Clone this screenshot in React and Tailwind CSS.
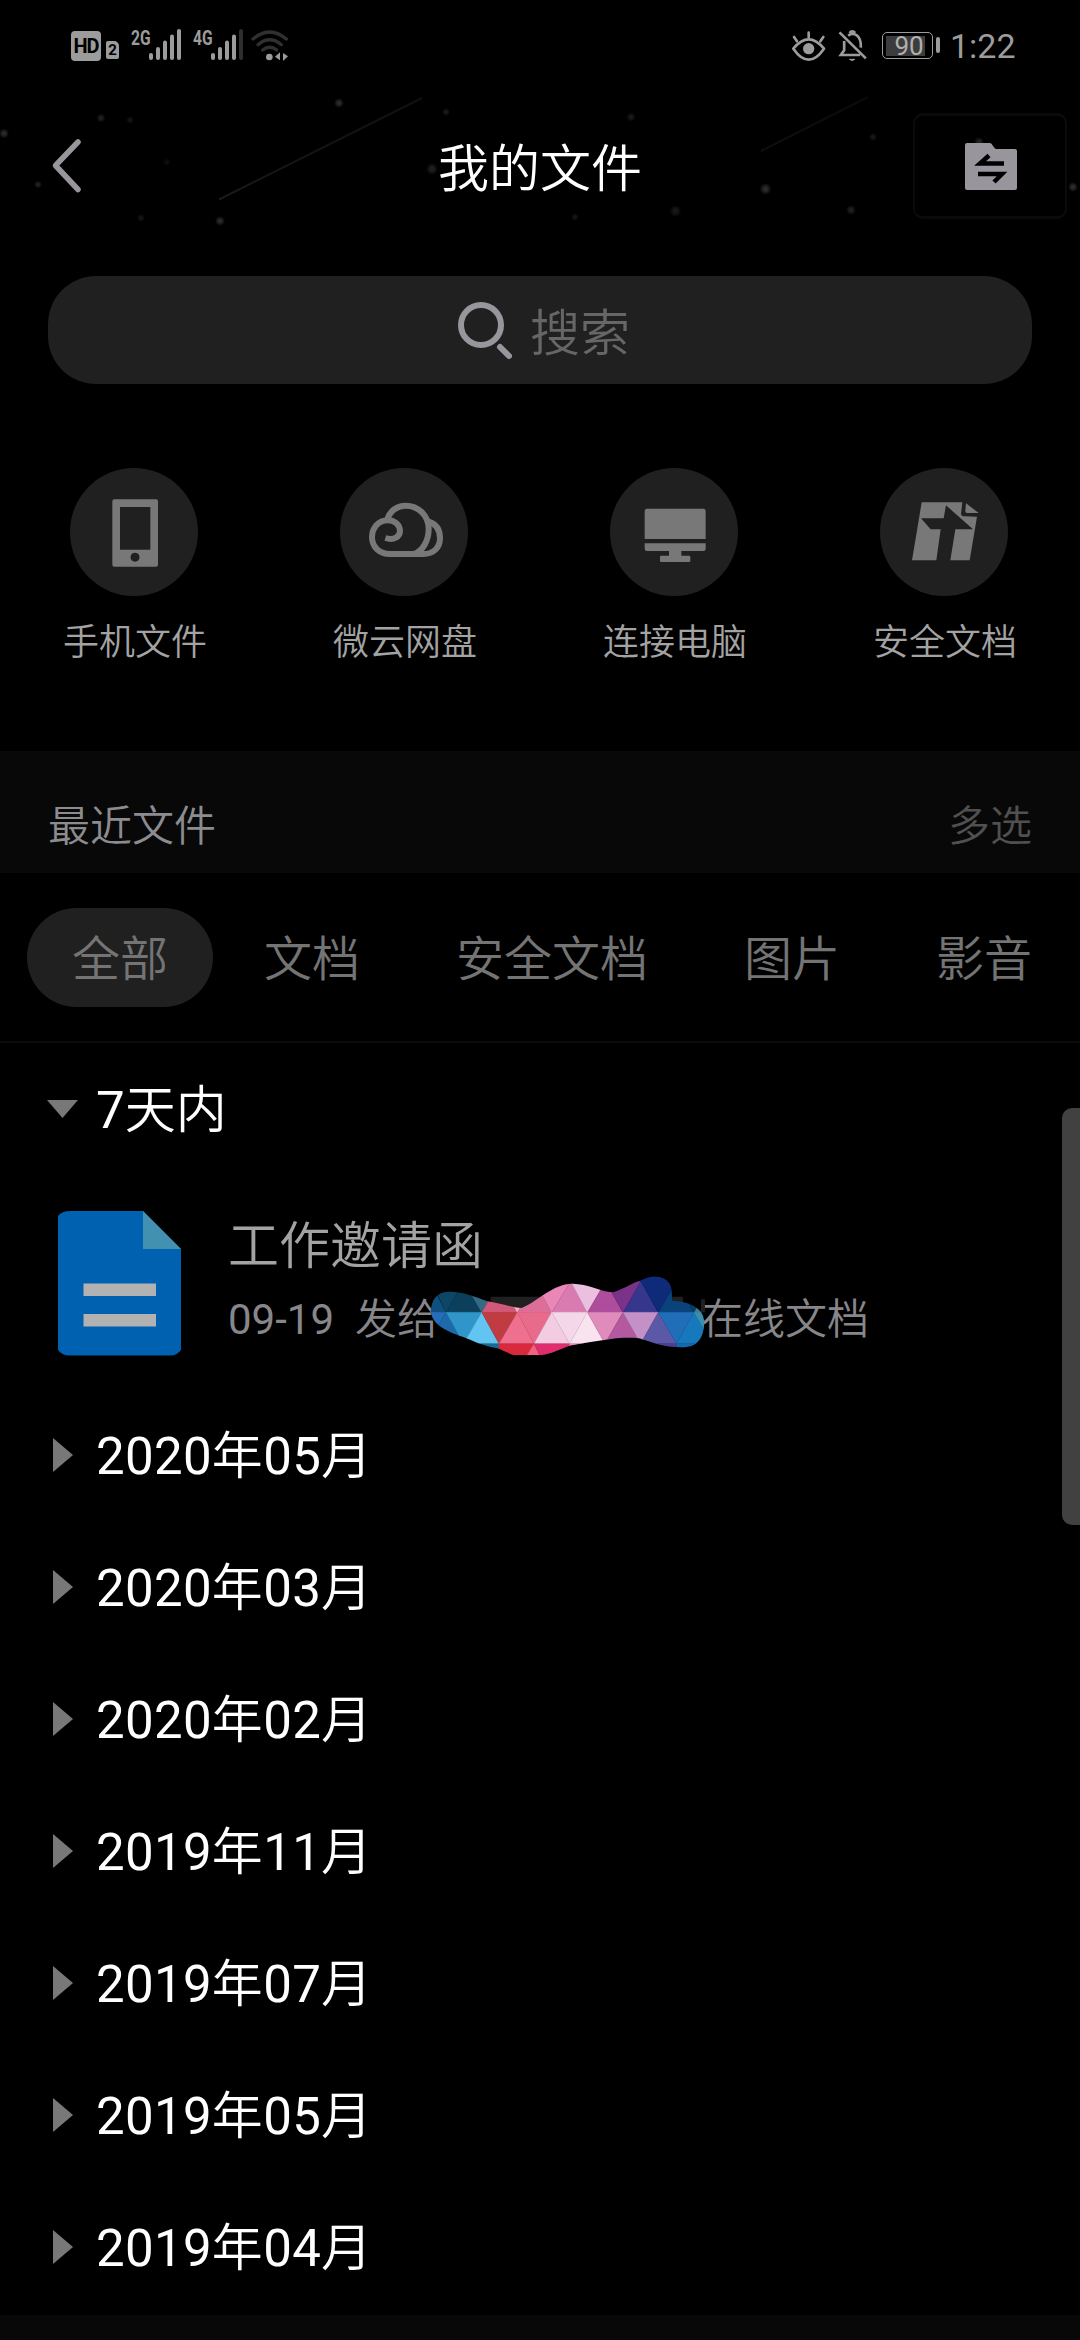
import React from "react";

const quickActions = [
  { label: "手机文件", Icon: PhoneIcon },
  { label: "微云网盘", Icon: CloudIcon },
  { label: "连接电脑", Icon: MonitorIcon },
  { label: "安全文档", Icon: SafeDocIcon },
];

const tabs = ["全部", "文档", "安全文档", "图片", "影音"];

const months = [
  "2020年05月",
  "2020年03月",
  "2020年02月",
  "2019年11月",
  "2019年07月",
  "2019年05月",
  "2019年04月",
];

const stars = [
  [4, 43.5, 4, 0.16], [101, 28, 3.5, 0.12], [130, 30, 3, 0.08], [339, 13, 4, 0.16],
  [446, 22, 3, 0.1], [167, 72, 3, 0.05], [38, 94.5, 3, 0.13], [141, 128, 3, 0.08],
  [220, 131, 4, 0.16], [432, 79, 5, 0.12], [631, 27, 3.5, 0.1], [575, 127, 3, 0.08],
  [675.5, 121, 5, 0.09], [765.5, 99, 5, 0.16], [851, 120, 4, 0.12], [873, 47, 3, 0.09],
  [979, 52, 4, 0.13], [1073, 97, 4, 0.17],
];

function PhoneIcon() {
  return (
    <svg viewBox="90 54 384 384" className="size-32">
      <path fill="#787878" fillRule="evenodd" d="M223 148H348a6 6 0 0 1 6 6V344a6 6 0 0 1 -6 6H223a6 6 0 0 1 -6 -6V154a6 6 0 0 1 6 -6ZM240 171V299H331V171ZM285 308a13.500 13.500 0 1 0 0.100 0Z" />
    </svg>
  );
}

function CloudIcon() {
  return (
    <svg viewBox="900 54 384 384" className="size-32" fill="none" stroke="#787878" strokeWidth="18">
      <path d="M1036 264C1062 272 1080 260 1080 243C1080 222 1062 211 1043 211C1015 211 996 234 996 262C996 292 1020 312 1050 312H1150C1182 312 1200 292 1200 264C1200 240 1188 222 1166 215" />
      <path d="M1042 208C1050 182 1072 167 1097 167C1136 167 1166 198 1166 237C1166 272 1148 304 1122 312" />
    </svg>
  );
}

function MonitorIcon() {
  return (
    <svg viewBox="150 54 384 384" className="size-32" fill="#787878">
      <path d="M261 176H430a7 7 0 0 1 7 7V267H254V183a7 7 0 0 1 7 -7Z" />
      <path d="M254 280H437V296a7 7 0 0 1 -7 7H364V317H387a4 4 0 0 1 4 4V332a4 4 0 0 1 -4 4H304a4 4 0 0 1 -4 -4V321a4 4 0 0 1 4 -4H327V303H261a7 7 0 0 1 -7 -7Z" />
    </svg>
  );
}

function SafeDocIcon() {
  return (
    <svg viewBox="960 54 384 384" className="size-32" fill="#787878">
      <path d="M1085 157H1207L1203 192Q1204 199 1211 199L1251 200L1229 331H1171L1186 238H1239L1158 166L1151 205H1083L1112 238H1142L1129 331H1056Z" />
      <path d="M1218 160L1256 189H1221Q1216 189 1216 184Z" />
    </svg>
  );
}

function SignalBars({ dimLast }) {
  const tops = [24, 18, 11.5, 5.500, 0];
  return (
    <svg viewBox="0 0 32 31" className="h-[31px] w-8">
      {tops.map((y, i) => (
        <rect key={i} x={i * 7} y={y} width="4" height={31 - y} rx="2" fill={dimLast && i === 4 ? "#2e2e2e" : "#9c9c9c"} />
      ))}
    </svg>
  );
}

function StatusBar() {
  return (
    <div className="flex h-[90px] items-start justify-between pr-[65px] pl-[71px] pt-[29px] text-[#9c9c9c]">
      <div className="flex h-8 items-start">
        <div className="mt-[2px] flex h-[30px] w-[30px] items-center justify-center rounded-[4px] bg-[#9c9c9c] text-[20px] leading-none font-bold tracking-[-1px] text-black">HD</div>
        <div className="mt-[12px] ml-[5px] flex h-[18px] w-[13px] items-center justify-center rounded-[2px] rounded-tr-[5px] bg-[#9c9c9c] text-[15px] leading-none font-bold text-black">2</div>
        <div className="mt-[-1px] ml-[12px] w-[18px] origin-left scale-x-[0.78] text-[20px] leading-[20px] font-bold whitespace-nowrap">2G</div>
        <SignalBars />
        <div className="mt-[-1px] ml-[12px] w-[18px] origin-left scale-x-[0.78] text-[20px] leading-[20px] font-bold whitespace-nowrap">4G</div>
        <SignalBars dimLast />
        <svg viewBox="634 56 114 96" className="ml-[8px] h-8 w-[38px]" fill="none" strokeLinecap="round">
          <path d="M640 86Q690 44 740 86" stroke="#303030" strokeWidth="10" />
          <path d="M655 103Q690 74 725 103" stroke="#303030" strokeWidth="10" />
          <path d="M669 119Q690 102 711 119" stroke="#303030" strokeWidth="10" />
          <circle cx="689" cy="140" r="10" fill="#9c9c9c" />
          <path d="M721 126V150L706 139ZM730 128V152L745 138Z" fill="#9c9c9c" />
        </svg>
      </div>
      <div className="flex h-8 items-start">
        <svg viewBox="92 58 102 96" className="mt-px h-8 w-[34px]" fill="none" stroke="#9c9c9c" strokeWidth="8" strokeLinecap="round">
          <path d="M96 114Q142 58 188 114Q142 180 96 114Z" strokeLinejoin="round" />
          <circle cx="142" cy="114" r="17" fill="#9c9c9c" stroke="none" />
          <path d="M142 66V80M98 79L107 92M186 79L177 92" />
        </svg>
        <svg viewBox="230 56 86 96" className="ml-[12px] h-8 w-[29px]" fill="none" stroke="#9c9c9c" strokeWidth="8">
          <path d="M234 66L313 144" />
          <path d="M248 92V120L238 134H296" />
          <path d="M260 76Q272 66 286 75Q299 84 298 112" />
          <path d="M264 68Q272 58 281 68" />
          <path d="M264 147H280Q272 154 264 147Z" strokeWidth="3" fill="#9c9c9c" />
        </svg>
        <div className="mt-[3px] ml-[15px] flex h-[27px] w-[51px] rounded-[5px] border-[1.500px] border-[#9c9c9c] p-[2.500px]">
          <div className="flex w-[39px] items-center justify-center bg-[#3c3c3c] pl-2 text-[26px] leading-none text-[#b0b0b0]">90</div>
        </div>
        <div className="mt-[8px] ml-[3px] h-4 w-[4px] rounded-[2px] bg-[#9c9c9c]" />
        <div className="ml-[10px] w-[65px] text-[34px] leading-[34px]">1:22</div>
      </div>
    </div>
  );
}

function Header() {
  return (
    <div className="relative flex h-[186px] items-start">
      <svg viewBox="0 0 1080 150" className="absolute top-0 left-0 h-[150px] w-[1080px]">
        <defs>
          <radialGradient id="star">
            <stop offset="0.3" stopColor="#fff" />
            <stop offset="1" stopColor="#fff" stopOpacity="0" />
          </radialGradient>
          <linearGradient id="trail" x1="0" y1="1" x2="1" y2="0">
            <stop offset="0" stopColor="#1a1a1a" />
            <stop offset="1" stopColor="#0a0a0c" />
          </linearGradient>
        </defs>
        {stars.map(([x, y, r, o]) => (
          <circle key={x} cx={x} cy={y} r={r + 1} fill="url(#star)" opacity={o} />
        ))}
        <path d="M219 109.500L422 8M761 61L868 7" stroke="url(#trail)" strokeWidth="2" fill="none" />
      </svg>
      <div className="relative flex w-full items-center pt-[23px]">
        <svg viewBox="0 0 32 56" className="ml-[50px] h-14 w-8" fill="none" stroke="#98969c" strokeWidth="5.500" strokeLinecap="round" strokeLinejoin="round">
          <path d="M28 4L5.500 27.500L28 51.500" />
        </svg>
        <h1 className="ml-[254px] w-[408px] pt-[8px] text-center text-[51px] leading-[60px] font-[350] text-white">我的文件</h1>
        <div className="ml-[169px] flex h-[106px] w-[154px] items-center justify-center rounded-[10px] border-[3px] border-[#0a0a0a] border-x-[2px]">
          <svg viewBox="0 0 52 47" className="ml-[2px] h-[47px] w-[52px]">
            <path fill="#98969c" d="M2 0H25Q26.500 0 28 3L30 5.500Q31 6 33 6H50Q52 6 52 8V45Q52 47 50 47H2Q0 47 0 45V2Q0 0 2 0Z" />
            <path d="M24 12.500L15 20.500H39M13 31H37L29 39" fill="none" stroke="#000" strokeWidth="4.500" />
          </svg>
        </div>
      </div>
    </div>
  );
}

// Triangle mosaic: each entry is [points, colour].
const mosaic = [
  ["4,186 111,186 57,80", "#10507e"], ["57,70 164,92 111,186", "#0e4668"], ["164,92 111,186 218,186", "#0c3f5c"],
  ["164,92 271,92 218,186", "#356a84"], ["271,92 218,186 325,186", "#d0597a"], ["271,92 378,92 325,186", "#f3b4c8"],
  ["378,92 325,186 428,186", "#dd6e98"], ["378,92 485,92 428,186", "#e987b7"], ["485,92 428,186 535,186", "#d97bb0"],
  ["485,92 590,92 535,186", "#eabfdf"], ["590,92 535,186 642,186", "#ad4d9c"], ["590,92 696,92 642,186", "#7b3289"],
  ["696,92 642,186 748,186", "#36368c"], ["690,70 803,70 803,92 748,186 696,92", "#0d2b78"],
  ["803,92 748,186 855,186", "#0a437c"], ["803,92 910,92 855,186", "#0a3c62"], ["910,92 855,186 910,186", "#3d7e9a"],
  ["4,185 111,185 56,279", "#256fba"], ["111,185 56,279 163,279", "#1c6aaa"], ["111,185 218,185 163,279", "#3095c9"],
  ["218,185 163,279 270,279", "#62c4f0"], ["218,185 325,185 270,279", "#c13c42"], ["325,185 270,279 375,279", "#ee708e"],
  ["325,185 428,185 375,279", "#e96b8c"], ["428,185 375,279 482,279", "#f3cce2"], ["428,185 535,185 482,279", "#f4d7e8"],
  ["535,185 482,279 588,279", "#f8e3ef"], ["535,185 642,185 588,279", "#df8bbb"], ["642,185 588,279 695,279", "#b4589f"],
  ["642,185 748,185 695,279", "#c390c7"], ["748,185 695,279 803,279", "#5b59a7"], ["748,185 855,185 803,279", "#206eb8"],
  ["855,185 803,279 910,279", "#1779bc"], ["855,185 962,185 910,279", "#3a8fae"],
  ["163,279 270,279 270,330 163,330", "#1a6a98"], ["270,279 375,279 350,330 270,330", "#d9293d"],
  ["375,279 345,330 400,330", "#f0647f"], ["375,279 482,279 482,330 400,330", "#df2d6e"],
  ["482,279 695,279 695,330 482,330", "#e98fb8"], ["695,279 803,279 803,330 695,330", "#4c3f95"], ["803,279 900,279 900,330 803,330", "#1668b0"],
];

function MosaicScribble() {
  return (
    <svg viewBox="60 70 840 250" className="absolute top-[-16px] left-[201px] h-[83.300px] w-[280px]">
      <clipPath id="scribble">
        <path d="M66 185C64 150 85 122 118 123C160 122 200 138 235 152C270 156 310 172 338 172C390 150 430 100 490 99C540 100 570 122 612 125C650 112 680 92 700 87C720 76 750 72 772 88C788 100 790 120 789 150C830 152 885 165 886 215C884 270 860 290 820 290C760 290 730 275 690 263C640 258 600 266 580 269C540 275 500 282 480 286C440 300 420 314 385 314H315C290 305 280 298 265 293C220 285 190 270 170 262C120 245 70 225 66 185Z" />
      </clipPath>
      <path d="M245 138H400V185H245ZM770 138H822V185H770ZM876 146H888V185H876Z" fill="#202020" />
      <g clipPath="url(#scribble)">
        {mosaic.map(([points, fill]) => (
          <polygon key={points} points={points} fill={fill} stroke={fill} strokeWidth="1" />
        ))}
      </g>
    </svg>
  );
}

function FileRow() {
  return (
    <div className="flex h-[214px] pt-[36px] pl-[58px]">
      <svg viewBox="0 0 123 145" className="h-[145px] w-[123px] shrink-0">
        <path fill="#0061b0" d="M12 0H85L123 38V139Q119 144.500 112 144.500H12Q4 144.500 0 139V5Q4 0 12 0Z" />
        <path fill="#4391b0" d="M85 0L123 38H85Z" />
        <path fill="#b2b2b2" d="M25.500 72.500H98V85H25.500ZM25.500 103H98V115.500H25.500Z" />
      </svg>
      <div className="ml-[47px] flex flex-col pt-[2px]">
        <div className="text-[51px] leading-[68px] font-[350] text-[#a3a3a3]">工作邀请函</div>
        <div className="relative mt-[9px] flex h-[60px] text-[42px] leading-[60px] whitespace-pre text-[#87868b]">
          <span className="w-[473px]">09-19  <span className="font-[350]">发给</span></span>
          <span className="font-[350]">在线文档</span>
          <MosaicScribble />
        </div>
      </div>
    </div>
  );
}

function MonthRow({ label, open }) {
  return (
    <div className="flex h-[132px] items-center text-[51px] leading-[60px] text-white">
      <div className="flex w-24 justify-center pl-[30px]">
        {open ? (
          <svg viewBox="0 0 31 18" className="mr-[1px] h-[18px] w-[31px]" fill="#787878"><path d="M0 0H31L15.500 18Z" /></svg>
        ) : (
          <svg viewBox="0 0 20 34" className="h-[34px] w-5" fill="#787878"><path d="M0 0L20 17L0 34Z" /></svg>
        )}
      </div>
      <span className={open ? "pt-[3px]" : "pt-[4px] tracking-[0.3px]"}>
        {label.split(/(\d+)/).map((part, i) => (
          <span key={i} className={/\d/.test(part) ? "font-normal" : "font-[350]"}>{part}</span>
        ))}
      </span>
    </div>
  );
}

export default function App() {
  return (
    <div className="relative h-[2340px] w-[1080px] overflow-hidden bg-black font-['Roboto','Noto_Sans_CJK_SC',sans-serif]">
      <StatusBar />
      <Header />

      <div className="mx-12 flex h-[108px] items-center rounded-[48px] bg-[#202020] pl-[410px]">
        <svg viewBox="0 0 54 58" className="mt-[2px] h-[58px] w-[54px]" fill="none" stroke="#98969c">
          <circle cx="23" cy="23" r="20" strokeWidth="6" />
          <path d="M42 45L51 54" strokeWidth="6" strokeLinecap="round" />
        </svg>
        <span className="ml-[18px] pt-[7px] text-[50px] leading-[60px] font-[350] text-[#666]">搜索</span>
      </div>

      <div className="mt-[84px] grid h-[283px] grid-cols-4">
        {quickActions.map(({ label, Icon }) => (
          <div key={label} className="flex flex-col items-center">
            <div className="mr-[2px] size-32 rounded-full bg-[#202020]"><Icon /></div>
            <span className="mt-[23px] text-[36px] leading-[48px] font-[350] text-[#a3a3a3]">{label}</span>
          </div>
        ))}
      </div>

      <div className="flex h-[122px] items-center justify-between bg-[#080808] px-12 pt-[30px] text-[42px] leading-[60px] font-[350]">
        <span className="text-[#8c8b90]">最近文件</span>
        <span className="text-[#505050]">多选</span>
      </div>

      <div className="flex h-[170px] items-center border-b-2 border-[#0b0b0b] px-[27px] text-[48px] leading-[60px] font-[350] text-[#747474]">
        {tabs.map((tab, i) => (
          <div
            key={tab}
            className={i === 0 ? "mr-[3px] flex h-[99px] shrink-0 items-center rounded-full bg-[#202020] px-[45px] pt-[5px] whitespace-nowrap" : "flex h-[99px] shrink-0 items-center px-12 pt-[5px] whitespace-nowrap"}
          >
            {tab}
          </div>
        ))}
      </div>

      <MonthRow label="7天内" open />
      <FileRow />
      {months.map((m) => (
        <MonthRow key={m} label={m} />
      ))}
      <div className="mt-[2px] h-[25px] bg-[#080808]" />

      <div className="absolute top-[1108px] right-0 h-[417px] w-[18px] rounded-l-[10px] bg-[#414141]" />
    </div>
  );
}
